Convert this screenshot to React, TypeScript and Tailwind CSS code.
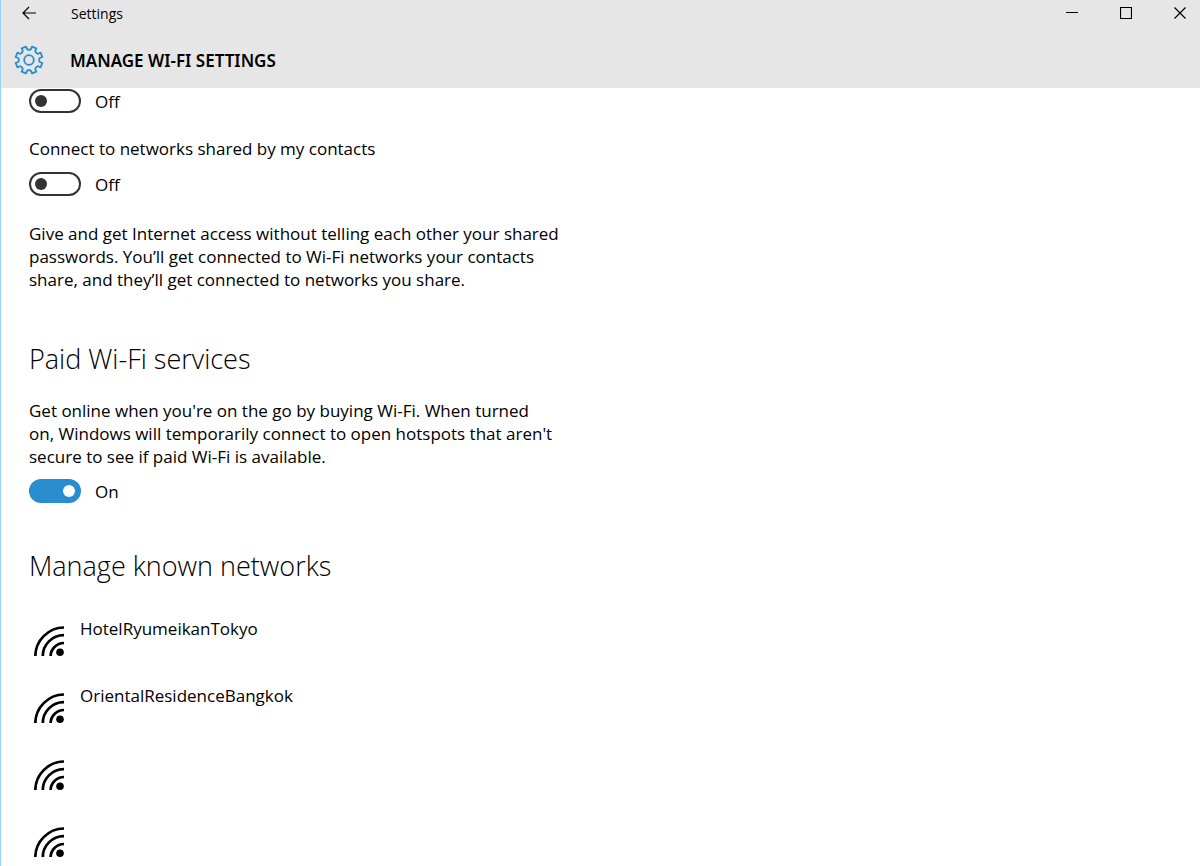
import { useState } from "react";

const networks = ["HotelRyumeikanTokyo", "OrientalResidenceBangkok", "", ""];

function gearPath() {
    const points: string[] = [];
    for (let i = 0; i < 8; i++) {
        const mid = 22.5 + i * 45;
        [[-17, 10.3], [-12, 11], [-10, 13.7], [10, 13.7], [12, 11], [17, 10.3]].forEach(([offset, radius]) => {
            const angle = ((mid + offset) * Math.PI) / 180;
            points.push(`${(15 + radius * Math.sin(angle)).toFixed(2)} ${(15 - radius * Math.cos(angle)).toFixed(2)}`);
        });
    }
    return `M${points.join("L")}Z`;
}

function GearIcon() {
    return (
        <svg viewBox="0 0 30 30" className="size-[30px] shrink-0 text-[#2a8dd0]" fill="none" stroke="currentColor" strokeWidth="1.8" strokeLinejoin="round" aria-hidden="true">
            <path d={gearPath()} />
            <circle cx="15" cy="15" r="4.8" />
        </svg>
    );
}

function WifiIcon() {
    return (
        <svg viewBox="0 0 30 30" className="size-[30px] shrink-0" fill="none" stroke="black" strokeWidth="2.7" aria-hidden="true">
            <path d="M1.3 30.5A29 29 0 0 1 30 1.5M8.8 30.5A21 21 0 0 1 30 9.2M16.6 30.5A13.5 13.5 0 0 1 30 17" />
            <circle cx="26" cy="26.2" r="3.8" fill="black" stroke="none" />
        </svg>
    );
}

function Toggle({ label, initial = false }: { label: string; initial?: boolean }) {
    const [on, setOn] = useState(initial);
    return (
        <label className="flex h-6 w-fit items-center gap-3.5">
            <span className="relative flex h-6 w-[52px]">
                <input
                    type="checkbox"
                    role="switch"
                    aria-label={label}
                    checked={on}
                    onChange={(e) => setOn(e.target.checked)}
                    className="peer h-6 w-[52px] appearance-none rounded-full border-2 border-[#333] bg-white checked:border-[#2a8dd0] checked:bg-[#2a8dd0]"
                />
                <span className="pointer-events-none absolute top-1.5 left-1.5 size-3 rounded-full bg-[#333] peer-checked:left-[34px] peer-checked:bg-white" />
            </span>
            <span>{on ? "On" : "Off"}</span>
        </label>
    );
}

export default function App() {
    return (
        <div className="min-h-screen border-l border-[#99d1fa] bg-white font-['Open_Sans',sans-serif] text-[17px] leading-[23px] text-black">
            <header className="h-[88px] bg-[#e6e6e6]">
                <div className="flex h-[26px] items-center">
                    <button type="button" aria-label="Back" className="flex h-[26px] w-14 items-center justify-center">
                        <svg viewBox="0 0 14 14" className="size-3.5" fill="none" stroke="black" strokeWidth="1.2" aria-hidden="true">
                            <path d="M14 7H1M7 1L1 7l6 6" />
                        </svg>
                    </button>
                    <span className="ml-3.5 text-[14px]">Settings</span>
                    <div className="ml-auto flex gap-3.5">
                        <button type="button" aria-label="Minimize" className="flex h-[26px] w-10 items-center justify-center">
                            <svg viewBox="0 0 12 12" className="size-3" stroke="black" aria-hidden="true">
                                <path d="M0 5.5h12" />
                            </svg>
                        </button>
                        <button type="button" aria-label="Maximize" className="flex h-[26px] w-10 items-center justify-center">
                            <svg viewBox="0 0 12 12" className="size-3" fill="none" stroke="black" strokeWidth="1.2" aria-hidden="true">
                                <path d="M.5 .5h11v11h-11z" />
                            </svg>
                        </button>
                        <button type="button" aria-label="Close" className="flex h-[26px] w-10 items-center justify-center">
                            <svg viewBox="0 0 12 12" className="size-3" stroke="black" strokeWidth="1.2" aria-hidden="true">
                                <path d="M.5 .5l11 11M11.5 .5l-11 11" />
                            </svg>
                        </button>
                    </div>
                </div>
                <div className="flex h-[68px] items-center gap-[26px] px-[13px]">
                    <GearIcon />
                    <h1 className="font-['Noto_Sans',sans-serif] font-semibold">MANAGE WI-FI SETTINGS</h1>
                </div>
            </header>

            <main className="px-7 pt-px">
                <Toggle label="Share networks with my contacts" />
                <p className="mt-6 mb-3">Connect to networks shared by my contacts</p>
                <Toggle label="Connect to networks shared by my contacts" />
                <p className="mt-[26px] max-w-[530px]">
                    Give and get Internet access without telling each other your shared passwords. You’ll get connected to Wi-Fi networks your contacts share, and they’ll get connected to networks you share.
                </p>

                <h2 className="mt-[50px] text-[27px] leading-9 font-light">Paid Wi-Fi services</h2>
                <p className="mt-[22px] mb-[11px] max-w-[527px]">
                    Get online when you're on the go by buying Wi-Fi. When turned on, Windows will temporarily connect to open hotspots that aren't secure to see if paid Wi-Fi is available.
                </p>
                <Toggle label="Paid Wi-Fi services" initial />

                <h2 className="mt-[45px] text-[27px] leading-9 font-light">Manage known networks</h2>
                <ul className="mt-[33px]">
                    {networks.map((name, i) => (
                        <li key={i} className="flex h-[67px] gap-4 pl-[5px]">
                            <div className="pt-[9px]">
                                <WifiIcon />
                            </div>
                            <span>{name}</span>
                        </li>
                    ))}
                </ul>
            </main>
        </div>
    );
}
